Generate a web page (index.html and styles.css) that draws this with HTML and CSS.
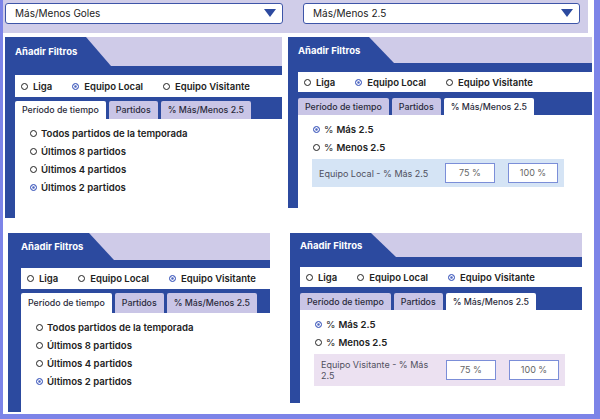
FILE: index.html
```html
<!DOCTYPE html>
<html lang="es">
<head>
  <meta charset="UTF-8">
  <title>Filtros Más/Menos</title>
  <link rel="stylesheet" href="styles.css">
</head>
<body>
<div class="page">

  <div class="selectors">
    <div class="select select-a">Más/Menos Goles<span class="caret"></span></div>
    <div class="select select-b">Más/Menos 2.5<span class="caret"></span></div>
  </div>

  <div class="panels">

    <section class="panel p1">
      <div class="panel-head"><div class="head-tab">Añadir Filtros</div></div>
      <div class="panel-body">
        <div class="radio-row">
          <span class="opt"><span class="dot"></span>Liga</span>
          <span class="opt"><span class="dot on"></span>Equipo Local</span>
          <span class="opt"><span class="dot"></span>Equipo Visitante</span>
        </div>
        <div class="tabs">
          <span class="tab active">Período de tiempo</span>
          <span class="tab">Partidos</span>
          <span class="tab">% Más/Menos 2.5</span>
        </div>
        <div class="tab-content">
          <div class="choice"><span class="dot"></span>Todos partidos de la temporada</div>
          <div class="choice"><span class="dot"></span>Últimos 8 partidos</div>
          <div class="choice"><span class="dot"></span>Últimos 4 partidos</div>
          <div class="choice"><span class="dot on"></span>Últimos 2 partidos</div>
        </div>
      </div>
    </section>

    <section class="panel p2">
      <div class="panel-head"><div class="head-tab">Añadir Filtros</div></div>
      <div class="panel-body">
        <div class="radio-row">
          <span class="opt"><span class="dot"></span>Liga</span>
          <span class="opt"><span class="dot on"></span>Equipo Local</span>
          <span class="opt"><span class="dot"></span>Equipo Visitante</span>
        </div>
        <div class="tabs">
          <span class="tab">Período de tiempo</span>
          <span class="tab">Partidos</span>
          <span class="tab active">% Más/Menos 2.5</span>
        </div>
        <div class="tab-content">
          <div class="choice"><span class="dot on"></span><span class="pct">%</span>Más 2.5</div>
          <div class="choice"><span class="dot"></span><span class="pct">%</span>Menos 2.5</div>
          <div class="range range-local">
            <span class="range-label">Equipo Local - % Más 2.5</span>
            <span class="range-input">75 %</span>
            <span class="range-input">100 %</span>
          </div>
        </div>
      </div>
    </section>

    <section class="panel p3">
      <div class="panel-head"><div class="head-tab">Añadir Filtros</div></div>
      <div class="panel-body">
        <div class="radio-row">
          <span class="opt"><span class="dot"></span>Liga</span>
          <span class="opt"><span class="dot"></span>Equipo Local</span>
          <span class="opt"><span class="dot on"></span>Equipo Visitante</span>
        </div>
        <div class="tabs">
          <span class="tab active">Período de tiempo</span>
          <span class="tab">Partidos</span>
          <span class="tab">% Más/Menos 2.5</span>
        </div>
        <div class="tab-content">
          <div class="choice"><span class="dot"></span>Todos partidos de la temporada</div>
          <div class="choice"><span class="dot"></span>Últimos 8 partidos</div>
          <div class="choice"><span class="dot"></span>Últimos 4 partidos</div>
          <div class="choice"><span class="dot on"></span>Últimos 2 partidos</div>
        </div>
      </div>
    </section>

    <section class="panel p4">
      <div class="panel-head"><div class="head-tab">Añadir Filtros</div></div>
      <div class="panel-body">
        <div class="radio-row">
          <span class="opt"><span class="dot"></span>Liga</span>
          <span class="opt"><span class="dot"></span>Equipo Local</span>
          <span class="opt"><span class="dot on"></span>Equipo Visitante</span>
        </div>
        <div class="tabs">
          <span class="tab">Período de tiempo</span>
          <span class="tab">Partidos</span>
          <span class="tab active">% Más/Menos 2.5</span>
        </div>
        <div class="tab-content">
          <div class="choice"><span class="dot on"></span><span class="pct">%</span>Más 2.5</div>
          <div class="choice"><span class="dot"></span><span class="pct">%</span>Menos 2.5</div>
          <div class="range range-visit">
            <span class="range-label">Equipo Visitante - % Más 2.5</span>
            <span class="range-input">75 %</span>
            <span class="range-input">100 %</span>
          </div>
        </div>
      </div>
    </section>

  </div>
</div>
</body>
</html>
```

FILE: styles.css
```css
body {
  margin: 0;
  background: #fff;
  color: #222;
  font-family: Inter, "Noto Sans", sans-serif;
}
.page {
  height: 419px;
  box-sizing: border-box;
  border-left: 3px solid #7c84e8;
  border-right: 6px solid #7c84e8;
  border-bottom: 5px solid #7c84e8;
}

/* top selectors */
.selectors {
  display: flex;
  gap: 20px;
  height: 33px;
  margin-right: 6px;
  padding: 3px 0 0 2px;
  box-sizing: border-box;
  background: #d0cde9;
}
.select {
  position: relative;
  height: 21px;
  box-sizing: border-box;
  padding-left: 9px;
  border: 1.5px solid #3d55a8;
  border-radius: 3px;
  background: #fff;
  font-size: 10px;
  line-height: 18px;
  color: #222;
}
.select-a { width: 278px; }
.select-b { width: 277px; }
.caret {
  position: absolute;
  right: 6px;
  top: 5px;
  width: 0;
  height: 0;
  border-left: 6.5px solid transparent;
  border-right: 6.5px solid transparent;
  border-top: 8px solid #2c4a9f;
}

/* panels */
.panels {
  display: grid;
  grid-template-columns: 285px 1fr;
  row-gap: 15px;
  align-items: start;
  margin-top: 4px;
}
.panel {
  display: flex;
  flex-direction: column;
  background: #2c4a9f;
}
.p1 { margin-left: 2px; width: 277px; height: 181px; --strip: 10px; --head: 29px; --band: 9px; --row: 22px; --tgap: 4px; --tab: 18px; }
.p2 { margin-left: 0; width: 304px; height: 171px; --strip: 10px; --head: 26px; --band: 9px; --row: 20px; --tgap: 6px; --tab: 17px; }
.p3 { margin-left: 5px; width: 262px; height: 179px; --strip: 13px; --head: 27px; --band: 8px; --row: 21px; --tgap: 4px; --tab: 20px; }
.p4 { margin-left: 2px; width: 292px; height: 170px; --strip: 10px; --head: 24px; --band: 10px; --row: 20px; --tgap: 6px; --tab: 17px; }

.panel-head {
  height: var(--head);
  background: #cfcbe8;
}
.head-tab {
  width: 106px;
  height: 100%;
  box-sizing: border-box;
  padding-left: var(--strip);
  background: #2c4a9f;
  clip-path: polygon(0 0, 81px 0, 106px 100%, 0 100%);
  color: #fff;
  font-size: 9.5px;
  font-weight: 700;
  display: flex;
  align-items: center;
}
.panel-body {
  flex: 1;
  display: flex;
  flex-direction: column;
  padding-left: var(--strip);
}
.radio-row {
  display: flex;
  align-items: center;
  gap: 20px;
  height: var(--row);
  margin-top: var(--band);
  padding-left: 6px;
  background: #fff;
  font-size: 9.5px;
  font-weight: 600;
  white-space: nowrap;
}
.opt {
  display: flex;
  align-items: center;
  gap: 5px;
}
.dot {
  display: inline-block;
  flex: none;
  width: 7px;
  height: 7px;
  box-sizing: border-box;
  border: 1.3px solid #222;
  border-radius: 50%;
  background: #fff;
}
.dot.on {
  border-color: #4a63c0;
  background: #4a63c0;
  box-shadow: inset 0 0 0 1.2px #fff;
}

.tabs {
  display: flex;
  gap: 3px;
  margin-top: var(--tgap);
}
.tab {
  height: var(--tab);
  line-height: var(--tab);
  padding: 0 7px;
  border-radius: 2px 2px 0 0;
  background: #c9c5e6;
  font-size: 8.8px;
  font-weight: 500;
  color: #2a2a3a;
  white-space: nowrap;
}
.tab.active {
  background: #fff;
}

.tab-content {
  flex: 1;
  padding: 5px 0 0 15px;
  background: #fff;
}
.choice {
  display: flex;
  align-items: center;
  gap: 4px;
  height: 18px;
  font-size: 9.6px;
  font-weight: 600;
  white-space: nowrap;
}
.pct {
  font-weight: 400;
  margin-right: -1px;
}
.range {
  display: flex;
  align-items: center;
  gap: 13px;
  width: 252px;
  box-sizing: border-box;
  margin: 3px 0 0 -1px;
  padding: 4px 6px 4px 7px;
  font-size: 9px;
  color: #505060;
}
.range-local { background: #d5e4f5; }
.range-visit { background: #ece1f1; width: 251px; line-height: 11px; padding-top: 5px; padding-bottom: 5px; }
.range-label {
  flex: 1;
  margin-right: -5px;
}
.range-input {
  flex: none;
  width: 50px;
  height: 20px;
  box-sizing: border-box;
  border: 1px solid #7b8ed8;
  background: #fff;
  text-align: center;
  line-height: 18px;
  font-size: 9px;
  color: #666;
}
```
